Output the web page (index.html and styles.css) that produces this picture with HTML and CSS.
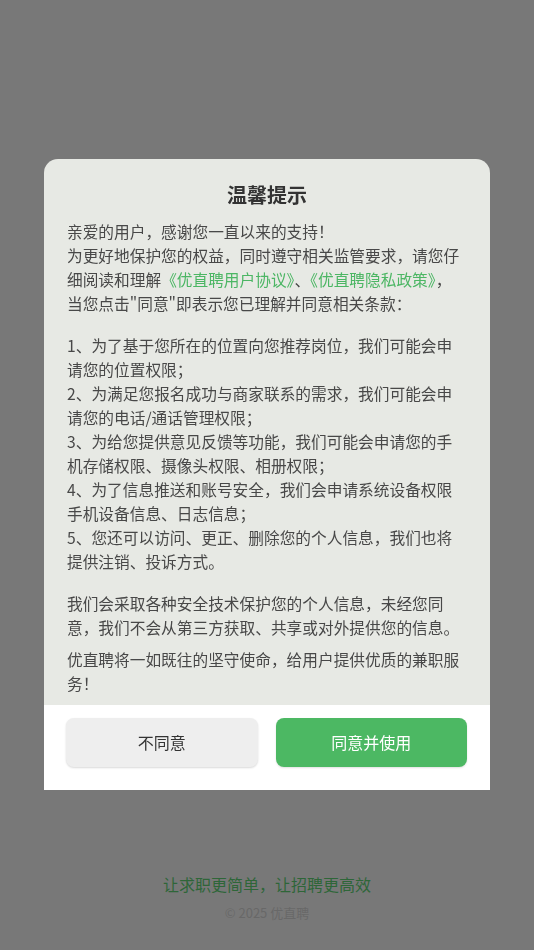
FILE: index.html
```html
<!DOCTYPE html>
<html lang="zh-CN">
<head>
<meta charset="utf-8">
<title>温馨提示</title>
<link rel="stylesheet" href="styles.css">
</head>
<body>
<div class="page">
  <div class="page-footer">
    <div class="slogan">让求职更简单，让招聘更高效</div>
    <div class="copyright">© 2025 优直聘</div>
  </div>
</div>

<div class="overlay">
  <div class="dialog">
    <div class="dialog-body">
      <h2 class="dialog-title">温馨提示</h2>
      <p class="para">亲爱的用户，感谢您一直以来的支持！<br>为更好地保护您的权益，同时遵守相关监管要求，请您仔<br>细阅读和理解<span class="link">《优直聘用户协议》</span>、<span class="link">《优直聘隐私政策》</span>，<br>当您点击"同意"即表示您已理解并同意相关条款：</p>
      <p class="para gap-lg">1、为了基于您所在的位置向您推荐岗位，我们可能会申<br>请您的位置权限；<br>2、为满足您报名成功与商家联系的需求，我们可能会申<br>请您的电话/通话管理权限；<br>3、为给您提供意见反馈等功能，我们可能会申请您的手<br>机存储权限、摄像头权限、相册权限；<br>4、为了信息推送和账号安全，我们会申请系统设备权限<br>手机设备信息、日志信息；<br>5、您还可以访问、更正、删除您的个人信息，我们也将<br>提供注销、投诉方式。</p>
      <p class="para gap-lg">我们会采取各种安全技术保护您的个人信息，未经您同<br>意，我们不会从第三方获取、共享或对外提供您的信息。</p>
      <p class="para gap-sm">优直聘将一如既往的坚守使命，给用户提供优质的兼职服<br>务！</p>
    </div>
    <div class="dialog-actions">
      <button class="btn btn-cancel">不同意</button>
      <button class="btn btn-ok">同意并使用</button>
    </div>
  </div>
</div>
</body>
</html>
```

FILE: styles.css
```css
* { box-sizing: border-box; }

html, body {
  margin: 0;
  padding: 0;
}

body {
  width: 534px;
  height: 950px;
  background: #787878;
  font-family: "Noto Sans CJK SC", "Noto Sans", sans-serif;
  overflow: hidden;
}

.page {
  height: 950px;
  display: flex;
  flex-direction: column;
  justify-content: flex-end;
}

.page-footer {
  display: flex;
  flex-direction: column;
  align-items: center;
  padding-bottom: 28px;
}

.slogan {
  font-size: 16px;
  line-height: 24px;
  color: #2e6638;
}

.copyright {
  margin-top: 8px;
  font-size: 13px;
  line-height: 18px;
  color: #686868;
}

.overlay {
  position: fixed;
  inset: 0;
  display: flex;
  align-items: center;
  justify-content: center;
  padding-bottom: 2px;
}

.dialog {
  width: 446px;
  border-radius: 14px 14px 0 0;
  overflow: hidden;
  background: #e7e9e4;
}

.dialog-body {
  padding: 22px 10px 9px 23px;
}

.dialog-title {
  margin: 0 0 11px;
  font-size: 20px;
  line-height: 28px;
  font-weight: 700;
  color: #333333;
  text-align: center;
  padding-right: 13px;
}

.para {
  margin: 0;
  font-size: 15.7px;
  line-height: 24px;
  color: #484848;
  white-space: nowrap;
}

.gap-lg { margin-top: 18px; }
.gap-sm { margin-top: 8px; }

.link { color: #4cb664; }

.dialog-actions {
  background: #ffffff;
  display: flex;
  gap: 18px;
  padding: 13px 23px 23px 22px;
}

.btn {
  flex: 1;
  height: 49px;
  border: none;
  border-radius: 8px;
  font-family: inherit;
  font-size: 16px;
}

.btn-cancel {
  background: #eeeeee;
  color: #333333;
  box-shadow: 0 1px 2px rgba(0, 0, 0, 0.15);
}

.btn-ok {
  background: #4cb863;
  color: #ffffff;
  box-shadow: 0 1px 2px rgba(0, 0, 0, 0.12);
}
```
